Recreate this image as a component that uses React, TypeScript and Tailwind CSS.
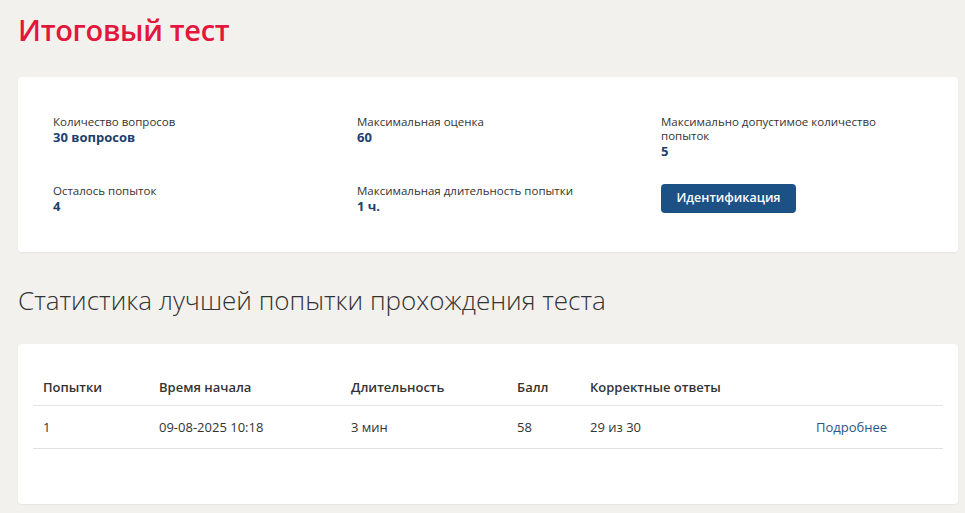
const info = [
  { label: 'Количество вопросов', value: '30 вопросов' },
  { label: 'Максимальная оценка', value: '60' },
  { label: 'Максимально допустимое количество попыток', value: '5' },
  { label: 'Осталось попыток', value: '4' },
  { label: 'Максимальная длительность попытки', value: '1 ч.' },
]

export default function App() {
  return (
    <div
      className="min-h-screen bg-[#f2f1ee] pl-[18px] pr-[7px] pt-[10px] pb-4 text-[#333]"
      style={{ fontFamily: '"Open Sans", "Noto Sans", sans-serif' }}
    >
      {/* заголовок */}
      <h1 className="text-[29px] leading-[40px] font-semibold text-[#e3163c] tracking-[-0.3px]">
        Итоговый тест
      </h1>

      {/* карточка с параметрами */}
      <div className="mt-[27px] bg-white rounded-[4px] shadow-[0_1px_2px_rgba(0,0,0,0.06)] pl-[35px] pt-[38px] pb-[38px]">
        <div className="grid grid-cols-[304px_304px_250px] gap-y-[25px]">
          {info.map((item) => (
            <div key={item.label}>
              <div className="text-[11.5px] leading-[14px] text-[#333]">{item.label}</div>
              <div className="text-[13px] leading-[16px] font-bold text-[#1b3f6e]">{item.value}</div>
            </div>
          ))}
          <div>
            <button className="h-[29px] w-[135px] rounded-[4px] bg-[#1c5186] text-white text-[12.5px] font-semibold">
              Идентификация
            </button>
          </div>
        </div>
      </div>

      {/* статистика */}
      <h2 className="mt-[32px] text-[26px] leading-[32px] font-light text-[#333]">
        Статистика лучшей попытки прохождения теста
      </h2>

      <div className="mt-[28px] bg-white rounded-[4px] shadow-[0_1px_2px_rgba(0,0,0,0.06)] px-[15px] pt-[25px] pb-[55px]">
        <table className="w-full text-[13px] leading-[18px] text-left border-collapse">
          <thead>
            <tr className="border-b border-[#e2e2e2]">
              <th className="font-semibold pl-[10px] py-[9px] w-[126px]">Попытки</th>
              <th className="font-semibold w-[192px]">Время начала</th>
              <th className="font-semibold w-[166px]">Длительность</th>
              <th className="font-semibold w-[73px]">Балл</th>
              <th className="font-semibold w-[226px]">Корректные ответы</th>
              <th></th>
            </tr>
          </thead>
          <tbody>
            <tr className="border-b border-[#e2e2e2]">
              <td className="pl-[10px] py-[12px]">1</td>
              <td>09-08-2025 10:18</td>
              <td>3 мин</td>
              <td>58</td>
              <td>29 из 30</td>
              <td className="text-[#2a5688]">Подробнее</td>
            </tr>
          </tbody>
        </table>
      </div>
    </div>
  )
}
